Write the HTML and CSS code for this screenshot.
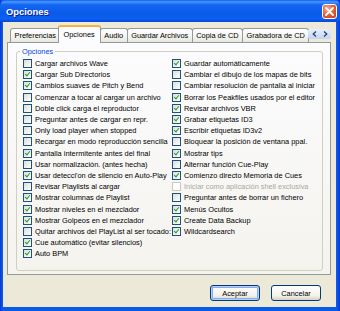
FILE: index.html
```html
<!DOCTYPE html>
<html lang="es">
<head>
    <meta charset="UTF-8">
    <title>Opciones</title>
    <link rel="stylesheet" href="styles.css">
</head>
<body>
    <div class="window">
        <div class="titlebar">
            <span class="title">Opciones</span>
            <span class="close">
                <svg width="9" height="9" viewBox="0 0 9 9"><path d="M1 1 L8 8 M8 1 L1 8" stroke="#fff" stroke-width="1.8" stroke-linecap="round"/></svg>
            </span>
        </div>
        <div class="frame">
            <div class="tabs">
                <div class="tab">Preferencias</div>
                <div class="tab active">Opciones</div>
                <div class="tab">Audio</div>
                <div class="tab">Guardar Archivos</div>
                <div class="tab">Copia de CD</div>
                <div class="tab">Grabadora de CD</div>
                <div class="tab-arrows">
                    <svg width="5" height="6" viewBox="0 0 5 6"><path d="M4 0.5 L1.2 3 L4 5.5" fill="none" stroke="#1d3b6e" stroke-width="1.2"/></svg>
                    <svg width="5" height="6" viewBox="0 0 5 6"><path d="M1 0.5 L3.8 3 L1 5.5" fill="none" stroke="#1d3b6e" stroke-width="1.2"/></svg>
                </div>
            </div>
            <div class="panel">
                <fieldset class="group">
                    <legend>Opciones</legend>
                    <div class="cols">
                        <ul class="col">
                            <li class="opt"><span class="box"></span>Cargar archivos Wave</li>
                            <li class="opt"><span class="box on"></span>Cargar Sub Directorios</li>
                            <li class="opt"><span class="box on"></span>Cambios suaves de Pitch y Bend</li>
                            <li class="opt"><span class="box"></span>Comenzar a tocar al cargar un archivo</li>
                            <li class="opt"><span class="box"></span>Doble click carga el reproductor</li>
                            <li class="opt"><span class="box"></span>Preguntar antes de cargar en repr.</li>
                            <li class="opt"><span class="box"></span>Only load player when stopped</li>
                            <li class="opt"><span class="box"></span>Recargar en modo reproducción sencilla</li>
                            <li class="opt"><span class="box on"></span>Pantalla intermitente antes del final</li>
                            <li class="opt"><span class="box"></span>Usar normalización. (antes hecha)</li>
                            <li class="opt"><span class="box on"></span>Usar detecci'on de silencio en Auto-Play</li>
                            <li class="opt"><span class="box"></span>Revisar Playlists al cargar</li>
                            <li class="opt"><span class="box on"></span>Mostrar columnas de Playlist</li>
                            <li class="opt"><span class="box on"></span>Mostrar niveles en el mezclador</li>
                            <li class="opt"><span class="box on"></span>Mostrar Golpeos en el mezclador</li>
                            <li class="opt"><span class="box"></span>Quitar archivos del PlayList al ser tocado:</li>
                            <li class="opt"><span class="box on"></span>Cue automático (evitar silencios)</li>
                            <li class="opt"><span class="box on"></span>Auto BPM</li>
                        </ul>
                        <ul class="col">
                            <li class="opt"><span class="box on"></span>Guardar automáticamente</li>
                            <li class="opt"><span class="box"></span>Cambiar el dibujo de los mapas de bits</li>
                            <li class="opt"><span class="box"></span>Cambiar resolución de pantalla al iniciar</li>
                            <li class="opt"><span class="box on"></span>Borrar los Peakfiles usados por el editor</li>
                            <li class="opt"><span class="box on"></span>Revisar archivos VBR</li>
                            <li class="opt"><span class="box on"></span>Grabar etiquetas ID3</li>
                            <li class="opt"><span class="box on"></span>Escribir etiquetas ID3v2</li>
                            <li class="opt"><span class="box"></span>Bloquear la posición de ventana ppal.</li>
                            <li class="opt"><span class="box on"></span>Mostrar tips</li>
                            <li class="opt"><span class="box"></span>Alternar función Cue-Play</li>
                            <li class="opt"><span class="box on"></span>Comienzo directo Memoria de Cues</li>
                            <li class="opt disabled"><span class="box"></span>Iniciar como aplicación shell exclusiva</li>
                            <li class="opt"><span class="box"></span>Preguntar antes de borrar un fichero</li>
                            <li class="opt"><span class="box on"></span>Menús Ocultos</li>
                            <li class="opt"><span class="box on"></span>Create Data Backup</li>
                            <li class="opt"><span class="box on"></span>Wildcardsearch</li>
                        </ul>
                    </div>
                </fieldset>
            </div>
            <div class="buttons">
                <button class="btn default">Aceptar</button>
                <button class="btn">Cancelar</button>
            </div>
        </div>
    </div>
</body>
</html>
```

FILE: styles.css
```css
body {
    margin: 0;
    background-color: #0a4fe0;
    font-family: "Liberation Sans", Arial, sans-serif;
    font-size: 7.4px;
    color: #000;
}

.window {
    width: 340px;
    height: 311px;
    display: flex;
    flex-direction: column;
    background: linear-gradient(to right, #0831d9, #0a5ae8 2px, #0a5ae8 337px, #0831d9);
}

.titlebar {
    height: 22px;
    flex: none;
    display: flex;
    align-items: center;
    padding: 0 3px 0 6px;
    background: linear-gradient(to bottom, #0a5ff0 0%, #4a96ff 8%, #1366f2 22%, #0a5ae8 60%, #0c60f2 85%, #0348db 100%);
    border-radius: 6px 6px 0 0;
}

.title {
    flex: 1;
    color: #fff;
    font-weight: bold;
    font-size: 9.4px;
    text-shadow: 1px 1px 0 #0a1e8c;
}

.close {
    width: 15px;
    height: 15px;
    box-sizing: border-box;
    border: 1px solid #fff;
    border-radius: 3px;
    background: radial-gradient(circle at 35% 30%, #f4ae92, #e2582f 55%, #c7401c);
    display: flex;
    align-items: center;
    justify-content: center;
}

.frame {
    flex: 1;
    margin: 0 4px 4px 3px;
    background-color: #ece9d8;
    display: flex;
    flex-direction: column;
    padding: 2px 5px 0 4px;
}

.tabs {
    display: flex;
    align-items: flex-end;
    height: 18px;
    padding-left: 3px;
    position: relative;
    z-index: 1;
}

.tab {
    height: 14px;
    line-height: 13px;
    padding: 0 3.5px;
    box-sizing: border-box;
    border: 1px solid #919b9c;
    border-bottom: none;
    border-radius: 3px 3px 0 0;
    background: linear-gradient(to bottom, #fff, #f3f3ef 60%, #e8e8e0);
    margin-right: -1px;
    white-space: nowrap;
}

.tab.active {
    height: 18px;
    line-height: 16px;
    padding: 0 5px;
    margin: 0 -1px 0 -2px;
    background: #fcfcfe;
    border-top: 2px solid #f5b33d;
    position: relative;
    top: 1px;
    z-index: 2;
}

.tab-arrows {
    margin-left: auto;
    margin-bottom: 3px;
    width: 23px;
    height: 10px;
    display: flex;
    justify-content: space-around;
    align-items: center;
    background: linear-gradient(to bottom, #e8eefc, #c5d3f3);
    border-radius: 2px;
}

.panel {
    height: 233px;
    box-sizing: border-box;
    border: 1px solid #919b9c;
    background: linear-gradient(to bottom, #fcfcfe, #f4f3ee);
    padding: 4px 7px 0 8px;
}

.group {
    margin: 0;
    padding: 0;
    height: 224px;
    box-sizing: border-box;
    border: 1px solid #d0d0bf;
    border-radius: 3px;
}

.group legend {
    color: #0046d5;
    padding: 0 2px;
    margin-left: 3px;
    line-height: 9px;
}

.cols {
    display: flex;
    padding: 2px 0 0 6px;
}

.col {
    list-style: none;
    margin: 0;
    padding: 0;
}

.col:first-child {
    width: 149px;
}

.opt {
    height: 11.2px;
    display: flex;
    align-items: center;
    white-space: nowrap;
}

.opt.disabled {
    color: #aca899;
}

.box {
    width: 9px;
    height: 9px;
    flex: none;
    box-sizing: border-box;
    border: 1px solid #1c5180;
    background: linear-gradient(135deg, #dcdcd7, #fff);
    margin-right: 3px;
    position: relative;
}

.disabled .box {
    border-color: #cac8bb;
    background: #fff;
}

.box.on::after {
    content: "";
    position: absolute;
    left: 2px;
    top: 0;
    width: 2px;
    height: 4px;
    border: solid #21a121;
    border-width: 0 1.5px 1.5px 0;
    transform: rotate(40deg);
}

.buttons {
    display: flex;
    justify-content: flex-end;
    gap: 11px;
    padding: 10px 10px 0 0;
}

.btn {
    width: 50px;
    height: 16px;
    padding: 0;
    font-family: inherit;
    font-size: 7.4px;
    color: #000;
    border: 1px solid #003c74;
    border-radius: 3px;
    background: linear-gradient(to bottom, #fff, #f2f1ea 70%, #d6d0c5);
}

.btn.default {
    box-shadow: inset 0 0 0 1px #b6cdf4, inset 0 0 0 2px #89adf0;
}
```
